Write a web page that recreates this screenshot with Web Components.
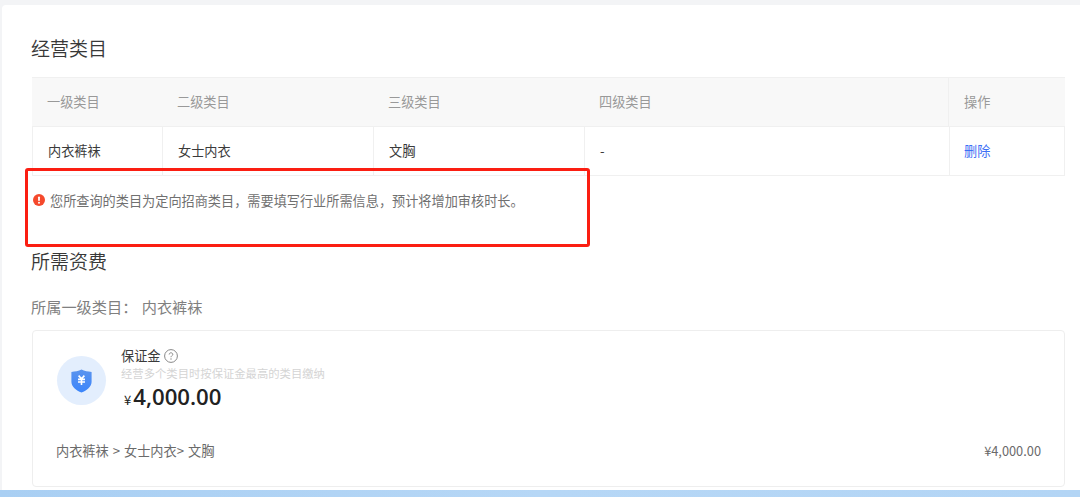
<!DOCTYPE html>
<html lang="zh">
<head>
<meta charset="utf-8">
<title>经营类目</title>
<style>
  html, body { margin: 0; padding: 0; height: 497px; overflow: hidden; background: #f3f4f6; }
  body { font-family: "Noto Sans CJK SC", "Noto Sans", sans-serif; color: #333; }
</style>
</head>
<body>
<app-page>
  <section-title style="--top: 30px">经营类目</section-title>
  <category-table></category-table>
  <notice-line>您所查询的类目为定向招商类目，需要填写行业所需信息，预计将增加审核时长。</notice-line>
  <section-title style="--top: 39px">所需资费</section-title>
  <group-label label="所属一级类目：" value="内衣裤袜"></group-label>
  <fee-card name="保证金" hint="经营多个类目时按保证金最高的类目缴纳" amount="4,000.00"
            path="内衣裤袜 &gt; 女士内衣&gt; 文胸" line-amount="¥4,000.00"></fee-card>
  <red-mark></red-mark>
</app-page>

<script>
class AppPage extends HTMLElement {
    constructor() {
        super();
        this.attachShadow({ mode: 'open' });
        this.shadowRoot.innerHTML = `
      <style>
        :host {
          display: block;
          position: relative;
          height: 497px;
          padding-top: 5px;
          box-sizing: border-box;
          overflow: hidden;
        }
        .card {
          margin-left: 2px;
          height: 485px;
          box-sizing: border-box;
          padding: 0 15px 0 29px;
          background: #fff;
          border-radius: 4px 0 0 0;
          overflow: hidden;
        }
        .bar {
          height: 7px;
          background: linear-gradient(90deg, #a9cff3, #b6d7f6 50%, #b3d5f5);
        }
      </style>
      <div class="card"><slot></slot></div>
      <div class="bar"></div>
    `;
    }
}

class SectionTitle extends HTMLElement {
    constructor() {
        super();
        this.attachShadow({ mode: 'open' });
        this.shadowRoot.innerHTML = `
      <style>
        :host {
          display: block;
          padding-top: var(--top, 0);
          font-size: 19px;
          line-height: 26px;
          color: #383838;
          font-weight: 350;
        }
      </style>
      <slot></slot>
    `;
    }
}

class CategoryTable extends HTMLElement {
    constructor() {
        super();
        this.attachShadow({ mode: 'open' });
        this.shadowRoot.innerHTML = `
      <style>
        :host {
          display: grid;
          grid-template-columns: 130px 211px 211px 365px 116px;
          margin: 16px 0 0 1px;
          width: 1033px;
          font-size: 13.2px;
          box-sizing: border-box;
        }
        .h, .c { display: flex; align-items: center; box-sizing: border-box; padding-bottom: 2px; }
        .h {
          height: 50px;
          padding-left: 15px;
          background: #f8f8f8;
          color: #999;
          border-top: 1px solid #f0f0f0;
          border-bottom: 1px solid #f0f0f0;
        }
        .h:first-child { border-left: 1px solid #f0f0f0; padding-left: 14px; }
        .h:nth-child(5) { border-right: 1px solid #f0f0f0; }
        .c {
          height: 49px;
          padding-left: 15px;
          color: #3a3a3a;
          border-left: 1px solid #f0f0f0;
          border-bottom: 1px solid #f0f0f0;
        }
        .c.last { border-right: 1px solid #f0f0f0; padding-left: 14px; }
        a { color: #3d6ff5; text-decoration: none; }
      </style>
      <div class="h">一级类目</div>
      <div class="h">二级类目</div>
      <div class="h">三级类目</div>
      <div class="h">四级类目</div>
      <div class="h">操作</div>
      <div class="c">内衣裤袜</div>
      <div class="c">女士内衣</div>
      <div class="c">文胸</div>
      <div class="c">-</div>
      <div class="c last"><a href="#">删除</a></div>
    `;
    }
}

class NoticeLine extends HTMLElement {
    constructor() {
        super();
        this.attachShadow({ mode: 'open' });
        this.shadowRoot.innerHTML = `
      <style>
        :host {
          display: flex;
          align-items: center;
          gap: 5px;
          margin: 15px 0 0 2px;
          height: 18px;
          font-size: 13.17px;
          color: #707070;
        }
        svg { width: 12px; height: 12px; flex: none; }
      </style>
      <svg viewBox="0 0 12 12">
        <circle cx="6" cy="6" r="6" fill="#f5492c"/>
        <rect x="5.1" y="2.4" width="1.8" height="4.6" rx=".8" fill="#fff"/>
        <circle cx="6" cy="8.8" r="1" fill="#fff"/>
      </svg>
      <span><slot></slot></span>
    `;
    }
}

class GroupLabel extends HTMLElement {
    constructor() {
        super();
        this.attachShadow({ mode: 'open' });
    }

    connectedCallback() {
        const label = this.getAttribute('label') || '';
        const value = this.getAttribute('value') || '';
        this.shadowRoot.innerHTML = `
      <style>
        :host {
          display: block;
          margin-top: 22px;
          font-size: 15.2px;
          line-height: 20px;
          color: #808080;
          word-spacing: 1px;
        }
      </style>
      ${label} ${value}
    `;
    }
}

class FeeCard extends HTMLElement {
    constructor() {
        super();
        this.attachShadow({ mode: 'open' });
    }

    connectedCallback() {
        const name = this.getAttribute('name') || '';
        const hint = this.getAttribute('hint') || '';
        const amount = this.getAttribute('amount') || '';
        const path = this.getAttribute('path') || '';
        const lineAmount = this.getAttribute('line-amount') || '';
        this.shadowRoot.innerHTML = `
      <style>
        :host {
          display: block;
          margin: 14px 0 0 1px;
          width: 1033px;
          height: 157px;
          box-sizing: border-box;
          border: 1px solid #eeeeee;
          border-radius: 4px;
          padding: 16px 23px 0 23px;
        }
        .top { display: flex; gap: 15px; }
        .badge {
          width: 49px;
          height: 49px;
          margin: 9px 0 0 1px;
          border-radius: 50%;
          background: #e3eefd;
          display: flex;
          align-items: center;
          justify-content: center;
          flex: none;
        }
        .badge svg { width: 21px; height: 24px; }
        .name {
          display: flex;
          align-items: center;
          gap: 3px;
          font-size: 13.2px;
          line-height: 18px;
          color: #3a3a3a;
        }
        .name svg { width: 14px; height: 14px; }
        .hint { font-size: 11.33px; line-height: 16px; color: #d4d4d4; white-space: nowrap; }
        .amount {
          display: flex;
          align-items: baseline;
          gap: 2px;
          margin: 0 0 0 3px;
          font-family: "Open Sans", "Noto Sans", sans-serif;
          font-size: 22.2px;
          line-height: 32px;
          font-weight: 600;
          color: #222;
        }
        .amount small { font-size: 13px; font-weight: 400; font-family: "Noto Sans CJK SC", sans-serif; }
        .line {
          display: flex;
          justify-content: space-between;
          align-items: center;
          margin-top: 26px;
          font-size: 13.2px;
          line-height: 18px;
          color: #6a6a6a;
          word-spacing: 1px;
        }
        .line span:last-child { font-size: 12.8px; }
      </style>
      <div class="top">
        <div class="badge">
          <svg viewBox="0 0 21 24">
            <defs>
              <linearGradient id="sh" x1="0" y1="0" x2="0" y2="1">
                <stop offset="0" stop-color="#5b94ee"/>
                <stop offset="1" stop-color="#3b85fb"/>
              </linearGradient>
            </defs>
            <path d="M10.5 .6 C13.5 2 17 2.8 20.6 2.9 V12.8 C20.6 18 15.8 21.4 10.5 23.6 C5.2 21.4 .4 18 .4 12.8 V2.9 C4 2.8 7.5 2 10.5 .6Z" fill="url(#sh)"/>
            <path d="M7.6 6.6 L10.5 9.8 L13.4 6.6 M7 10.4 H14 M7 13 H14 M10.5 9.8 V16" fill="none" stroke="#fff" stroke-width="1.6"/>
          </svg>
        </div>
        <div>
          <div class="name">${name}
            <svg viewBox="0 0 14 14">
              <circle cx="7" cy="7" r="6.4" fill="none" stroke="#888" stroke-width="1"/>
              <path d="M5.2 5.5 C5.2 4.4 6 3.8 7 3.8 C8 3.8 8.8 4.5 8.8 5.4 C8.8 6.6 7 6.7 7 8.2" fill="none" stroke="#888" stroke-width="1"/>
              <circle cx="7" cy="10" r=".7" fill="#888"/>
            </svg>
          </div>
          <div class="hint">${hint}</div>
          <div class="amount"><small>¥</small><span>${amount}</span></div>
        </div>
      </div>
      <div class="line"><span>${path}</span><span>${lineAmount}</span></div>
    `;
    }
}

// red annotation drawn on top of the screenshot
class RedMark extends HTMLElement {
    constructor() {
        super();
        this.attachShadow({ mode: 'open' });
        this.shadowRoot.innerHTML = `
      <style>
        :host {
          position: absolute;
          left: 25px;
          top: 168px;
          width: 565px;
          height: 79px;
          box-sizing: border-box;
          border: 3px solid #fb1e12;
          border-radius: 3px;
          pointer-events: none;
        }
      </style>
    `;
    }
}

customElements.define('app-page', AppPage);
customElements.define('section-title', SectionTitle);
customElements.define('category-table', CategoryTable);
customElements.define('notice-line', NoticeLine);
customElements.define('group-label', GroupLabel);
customElements.define('fee-card', FeeCard);
customElements.define('red-mark', RedMark);
</script>
</body>
</html>
